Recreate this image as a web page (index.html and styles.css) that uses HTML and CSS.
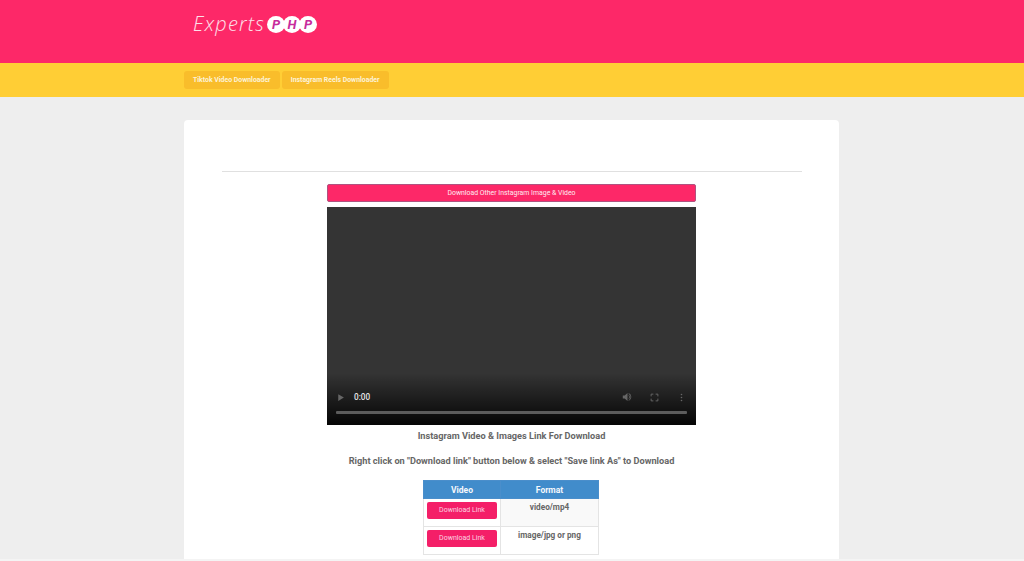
FILE: index.html
```html
<!DOCTYPE html>
<html lang="en">
<head>
    <meta charset="UTF-8">
    <meta name="viewport" content="width=device-width, initial-scale=1.0">
    <title>Instagram Video Downloader - ExpertsPHP</title>
    <link rel="stylesheet" href="styles.css">
</head>
<body>
    <header class="top-bar">
        <div class="wrap">
            <a class="logo" href="#">
                <span class="logo-word">Experts</span>
                <span class="logo-dots">
                    <span class="logo-dot">P</span>
                    <span class="logo-dot">H</span>
                    <span class="logo-dot">P</span>
                </span>
            </a>
        </div>
    </header>

    <nav class="nav-bar">
        <div class="wrap nav-links">
            <a class="nav-link" href="#">Tiktok Video Downloader</a>
            <a class="nav-link" href="#">Instagram Reels Downloader</a>
        </div>
    </nav>

    <main class="card">
        <hr class="divider">

        <div class="player-column">
            <a class="other-button" href="#">Download Other Instagram Image &amp; Video</a>

            <div class="player">
                <div class="controls">
                    <div class="controls-row">
                        <svg class="ctl-play" viewBox="0 0 12 12"><path d="M3 1.500 10.500 6 3 10.500z"/></svg>
                        <span class="time">0:00</span>
                        <svg class="ctl-volume" viewBox="0 0 14 12"><path d="M1 4h2.400L7 1v10L3.400 8H1z"/><path d="M8.500 3.200a3.300 3.300 0 0 1 0 5.600V7.300a1.700 1.700 0 0 0 0-2.600zM8.500 1a5.400 5.400 0 0 1 0 10V9.900a4.400 4.400 0 0 0 0-7.800z"/></svg>
                        <svg class="ctl-full" viewBox="0 0 12 12"><path d="M1.500 4.500v-3h3M7.500 1.500h3v3M10.500 7.500v3h-3M4.500 10.500h-3v-3"/></svg>
                        <svg class="ctl-more" viewBox="0 0 4 12"><circle cx="2" cy="2" r="1.100"/><circle cx="2" cy="6" r="1.100"/><circle cx="2" cy="10" r="1.100"/></svg>
                    </div>
                    <div class="timeline"></div>
                </div>
            </div>
        </div>

        <h4 class="note">Instagram Video &amp; Images Link For Download</h4>
        <h4 class="note note-second">Right click on "Download link" button below &amp; select "Save link As" to Download</h4>

        <table class="links-table">
            <thead>
                <tr>
                    <th class="col-video">Video</th>
                    <th class="col-format">Format</th>
                </tr>
            </thead>
            <tbody>
                <tr class="row-shaded">
                    <td><a class="link-button" href="#">Download Link</a></td>
                    <td>video/mp4</td>
                </tr>
                <tr>
                    <td><a class="link-button" href="#">Download Link</a></td>
                    <td>image/jpg or png</td>
                </tr>
            </tbody>
        </table>
    </main>

    <div class="bottom-edge"></div>
</body>
</html>
```

FILE: styles.css
```css
html, body {
    height: 561px;
    overflow: hidden;
}
body {
    margin: 0;
    background-color: #eeeeee;
    font-family: Roboto, "Liberation Sans", sans-serif;
    color: #666;
}
a {
    text-decoration: none;
}
.wrap {
    width: 655px;
    margin-left: 184px;
}
.top-bar {
    height: 63px;
    background: #fd2868;
}
.logo {
    display: inline-flex;
    align-items: center;
    margin: 12px 0 0 9px;
    color: #fde0ea;
}
.logo-word {
    width: 74px;
    font-family: "Open Sans", sans-serif;
    font-style: italic;
    font-weight: 300;
    font-size: 20px;
    letter-spacing: 1.200px;
    line-height: 24px;
}
.logo-dots {
    display: flex;
}
.logo-dot {
    width: 18px;
    height: 17px;
    margin-right: -2px;
    border-radius: 50%;
    background: #fff;
    color: #c72a9c;
    font-size: 13px;
    font-weight: 700;
    font-style: italic;
    line-height: 17px;
    text-align: center;
}
.nav-bar {
    height: 34px;
    background: #ffce35;
}
.nav-links {
    display: flex;
    gap: 2px;
    padding-top: 8px;
}
.nav-link {
    height: 18px;
    padding: 0 9px;
    border-radius: 3px;
    background: #f9bd2b;
    color: #fdf3d8;
    font-size: 6.900px;
    font-weight: 700;
    line-height: 18px;
}
.card {
    width: 655px;
    height: 441px;
    margin: 23px 0 0 184px;
    padding-top: 51px;
    box-sizing: border-box;
    border-radius: 4px 4px 0 0;
    background: #fff;
}
.divider {
    width: 580px;
    height: 1px;
    margin: 0 auto 12px;
    border: 0;
    background: #e0e0e0;
}
.player-column {
    width: 369px;
    margin: 0 auto;
}
.other-button {
    display: block;
    height: 18px;
    margin-bottom: 5px;
    box-sizing: border-box;
    border: 1px solid #b0527f;
    border-radius: 2px;
    background: #fd2868;
    color: #fdeaf0;
    font-size: 6.900px;
    line-height: 16px;
    text-align: center;
}
.player {
    position: relative;
    height: 218px;
    background: #343434;
}
.controls {
    position: absolute;
    left: 0;
    right: 0;
    bottom: 0;
    height: 52px;
    box-sizing: border-box;
    padding: 16px 9px 0;
    background: linear-gradient(to bottom, rgba(0,0,0,0), rgba(0,0,0,0.9));
}
.controls-row {
    display: flex;
    align-items: center;
    height: 16px;
}
.ctl-play {
    width: 9px;
    height: 9px;
    fill: #666;
}
.time {
    margin-left: 9px;
    color: #e4e4e4;
    font-size: 8.200px;
    font-weight: 500;
}
.ctl-volume {
    width: 11px;
    height: 10px;
    margin-left: auto;
    fill: #666;
}
.ctl-full {
    width: 9px;
    height: 9px;
    margin-left: 17px;
    fill: none;
    stroke: #666;
    stroke-width: 1.300;
}
.ctl-more {
    width: 3px;
    height: 9px;
    margin: 0 4px 0 21px;
    fill: #666;
}
.timeline {
    height: 3px;
    margin-top: 6px;
    border-radius: 1px;
    background: #5c5c5c;
}
.note {
    margin: 5px 0 0;
    font-size: 9.200px;
    font-weight: 700;
    line-height: 12px;
    text-align: center;
}
.note-second {
    margin-top: 13px;
}
.links-table {
    width: 176px;
    margin: 13px 0 0 239px;
    border-collapse: collapse;
    font-size: 8.200px;
}
.links-table th {
    height: 17px;
    padding: 0;
    border: 1px solid #4a8ecb;
    background: #418ccb;
    color: #f4f8fc;
    font-size: 8.500px;
    font-weight: 700;
    text-align: center;
}
.links-table th + th {
    border-left-color: #8fb9dd;
}
.col-video {
    width: 76px;
}
.links-table td {
    height: 28px;
    padding: 3px 3px 0;
    box-sizing: border-box;
    border: 1px solid #e4e4e4;
    font-weight: 700;
    text-align: center;
    vertical-align: top;
}
.row-shaded td {
    background: #f9f9f9;
}
.row-shaded td:first-child {
    background: #fff;
}
.link-button {
    display: block;
    height: 17px;
    border-radius: 2px;
    background: #f41f68;
    color: #fbd3e0;
    font-size: 7px;
    font-weight: 400;
    line-height: 17px;
}
.bottom-edge {
    position: fixed;
    left: 0;
    right: 0;
    bottom: 0;
    height: 2px;
    background: #f4f4f4;
}
```
